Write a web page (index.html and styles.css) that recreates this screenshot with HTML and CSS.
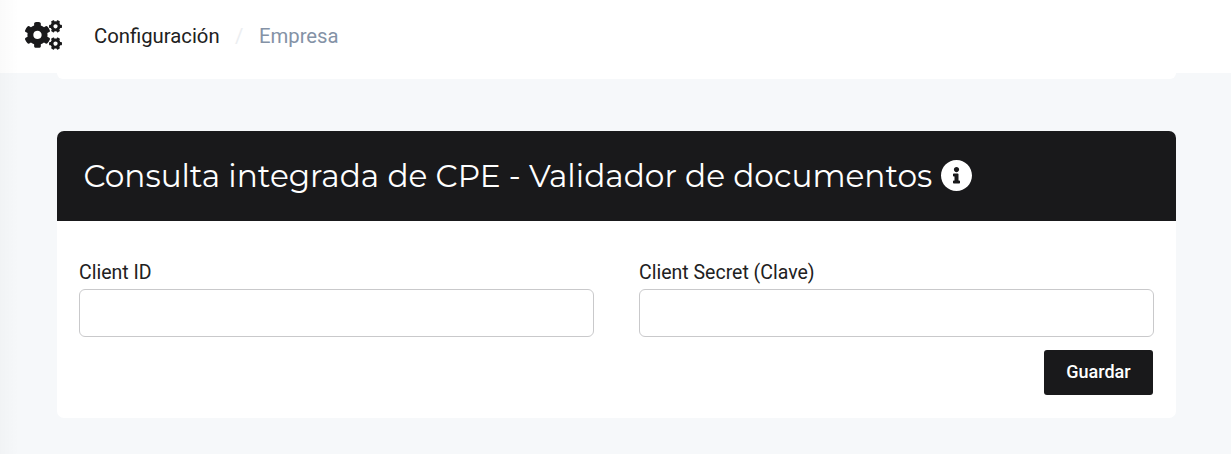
FILE: index.html
```html
<!DOCTYPE html>
<html lang="es">
<head>
<meta charset="utf-8">
<title>Configuración / Empresa</title>
<link rel="stylesheet" href="styles.css">
</head>
<body>
<header class="topbar">
  <svg class="cogs" viewBox="0 0 640 512" aria-hidden="true">
    <defs><path id="small-cog" d="M512.1 191l-8.2 14.3c-3 5.3-9.4 7.5-15.1 5.4-11.8-4.4-22.6-10.7-32.1-18.6-4.6-3.8-5.8-10.5-2.8-15.7l8.2-14.3c-6.9-8-12.3-17.3-15.9-27.4h-16.5c-6 0-11.2-4.3-12.2-10.3-2-12-2.1-24.6 0-37.1 1-6 6.2-10.4 12.2-10.4h16.5c3.6-10.1 9-19.4 15.9-27.4l-8.2-14.3c-3-5.2-1.9-11.9 2.8-15.7 9.5-7.9 20.4-14.2 32.1-18.6 5.7-2.1 12.1.1 15.1 5.4l8.2 14.3c10.5-1.9 21.2-1.9 31.7 0L552 6.3c3-5.3 9.4-7.5 15.1-5.4 11.8 4.4 22.6 10.7 32.1 18.6 4.6 3.8 5.8 10.5 2.8 15.7l-8.2 14.3c6.9 8 12.3 17.3 15.9 27.4h16.5c6 0 11.2 4.3 12.2 10.3 2 12 2.1 24.6 0 37.1-1 6-6.2 10.4-12.2 10.4h-16.5c-3.6 10.1-9 19.4-15.9 27.4l8.2 14.3c3 5.2 1.9 11.9-2.8 15.7-9.5 7.9-20.4 14.2-32.1 18.6-5.7 2.1-12.1-.1-15.1-5.4l-8.2-14.3c-10.4 1.9-21.2 1.9-31.7 0zm-10.5-58.8c38.5 29.6 82.4-14.3 52.8-52.8-38.5-29.7-82.4 14.3-52.8 52.8z"/></defs>
    <use href="#small-cog"/>
    <use href="#small-cog" y="299"/>
    <path d="M386.3 286.1l33.7 16.8c10.1 5.8 14.5 18.1 10.5 29.1-8.9 24.2-26.4 46.4-42.6 65.8-7.4 8.9-20.2 11.1-30.3 5.3l-29.1-16.8c-16 13.7-34.6 24.6-54.9 31.7v33.6c0 11.6-8.3 21.6-19.7 23.6-24.6 4.2-50.4 4.4-75.9 0-11.5-2-20-11.9-20-23.6V418c-20.3-7.2-38.9-18-54.9-31.7L74 403c-10 5.8-22.9 3.6-30.3-5.3-16.2-19.4-33.3-41.6-42.2-65.7-4-10.9.4-23.2 10.5-29.1l33.3-16.8c-3.9-20.9-3.9-42.4 0-63.4L12 205.8c-10.1-5.8-14.6-18.1-10.5-29 8.9-24.2 26-46.4 42.2-65.8 7.4-8.9 20.2-11.1 30.3-5.3l29.1 16.8c16-13.7 34.6-24.6 54.9-31.7V57.1c0-11.5 8.2-21.5 19.6-23.5 24.6-4.2 50.5-4.4 76-.1 11.5 2 20 11.9 20 23.6v33.6c20.3 7.2 38.9 18 54.9 31.7l29.1-16.8c10-5.8 22.9-3.6 30.3 5.3 16.2 19.4 33.2 41.6 42.1 65.8 4 10.9.1 23.2-10 29.1l-33.7 16.8c3.9 21 3.9 42.5 0 63.5zm-117.6 21.1c59.2-77-28.7-164.9-105.7-105.7-59.2 77 28.7 164.9 105.7 105.7z"/>
  </svg>
  <nav class="breadcrumb">
    <span>Configuración</span><span class="separator">/</span><span class="current">Empresa</span>
  </nav>
</header>
<main class="content">
  <div class="card-end"></div>
  <section class="card">
    <div class="card-header">
      <h2 class="card-title">Consulta integrada de CPE - Validador de documentos</h2>
      <svg class="info" viewBox="0 0 496 496" aria-hidden="true"><path d="M248 0C111 0 0 111 0 248s111 248 248 248 248-111 248-248S385 0 248 0zm0 110c23.200 0 42 18.800 42 42s-18.800 42-42 42-42-18.800-42-42 18.800-42 42-42zm56 254c0 6.600-5.400 12-12 12h-88c-6.600 0-12-5.400-12-12v-24c0-6.600 5.400-12 12-12h12v-64h-12c-6.600 0-12-5.400-12-12v-24c0-6.600 5.400-12 12-12h64c6.600 0 12 5.400 12 12v100h12c6.600 0 12 5.400 12 12v24z"/></svg>
    </div>
    <form class="card-body">
      <div class="fields">
        <label class="field"><span>Client ID</span><input class="input" type="text"></label>
        <label class="field"><span>Client Secret (Clave)</span><input class="input" type="text"></label>
      </div>
      <button class="save" type="button">Guardar</button>
    </form>
  </section>
</main>
<div class="edge-shadow"></div>
</body>
</html>
```
FILE: styles.css
```css
* { box-sizing: border-box; }
body {
  margin: 0;
  height: 454px;
  overflow: hidden;
  background: #f6f8fa;
  color: #212121;
  font-family: Roboto, "Liberation Sans", sans-serif;
  font-size: 19.5px;
}
.topbar {
  display: flex;
  align-items: center;
  height: 73px;
  padding: 0 25px 3px;
  background: #fff;
}
.cogs { width: 37px; height: 30px; fill: #19191b; }
.breadcrumb {
  display: flex;
  gap: 15.5px;
  margin-left: 32px;
  padding-top: 2px;
  font-size: 20.3px;
  line-height: 24px;
}
.separator { color: #eceef1; }
.current { color: #8492a6; }
.content { padding: 0 55px 0 57px; }
.card-end {
  height: 6px;
  margin-bottom: 52px;
  background: #fff;
  border-radius: 0 0 7px 7px;
}
.card {
  height: 287px;
  overflow: hidden;
  background: #fff;
  border-radius: 7px;
}
.card-header {
  display: flex;
  align-items: center;
  gap: 8.6px;
  height: 90px;
  padding-left: 26.4px;
  background: #19191b;
  color: #fff;
}
.card-title {
  margin: 0;
  font: 400 31.2px/40px Montserrat, Inter, sans-serif;
  white-space: nowrap;
}
.info { width: 31px; height: 31px; margin-bottom: 1px; fill: #fff; }
.card-body {
  display: flex;
  flex-direction: column;
  align-items: flex-end;
  padding: 40px 22px 0;
}
.fields {
  display: grid;
  grid-template-columns: 1fr 1fr;
  gap: 45px;
  width: 100%;
}
.field { display: flex; flex-direction: column; gap: 4px; line-height: 24px; }
.input {
  width: 100%;
  height: 48px;
  border: 1px solid #c9c9cb;
  border-radius: 6px;
  background: #fff;
}
.save {
  width: 109px;
  height: 45px;
  margin: 13px 1px 0 0;
  padding: 0 0 2px;
  border: 0;
  border-radius: 3px;
  background: #19191b;
  color: #fff;
  font: 500 18px/24px Roboto, sans-serif;
}
.edge-shadow {
  position: absolute;
  inset: 0 auto 0 0;
  width: 19px;
  background: linear-gradient(to right, rgba(0, 0, 0, .018), rgba(0, 0, 0, 0));
}
```
